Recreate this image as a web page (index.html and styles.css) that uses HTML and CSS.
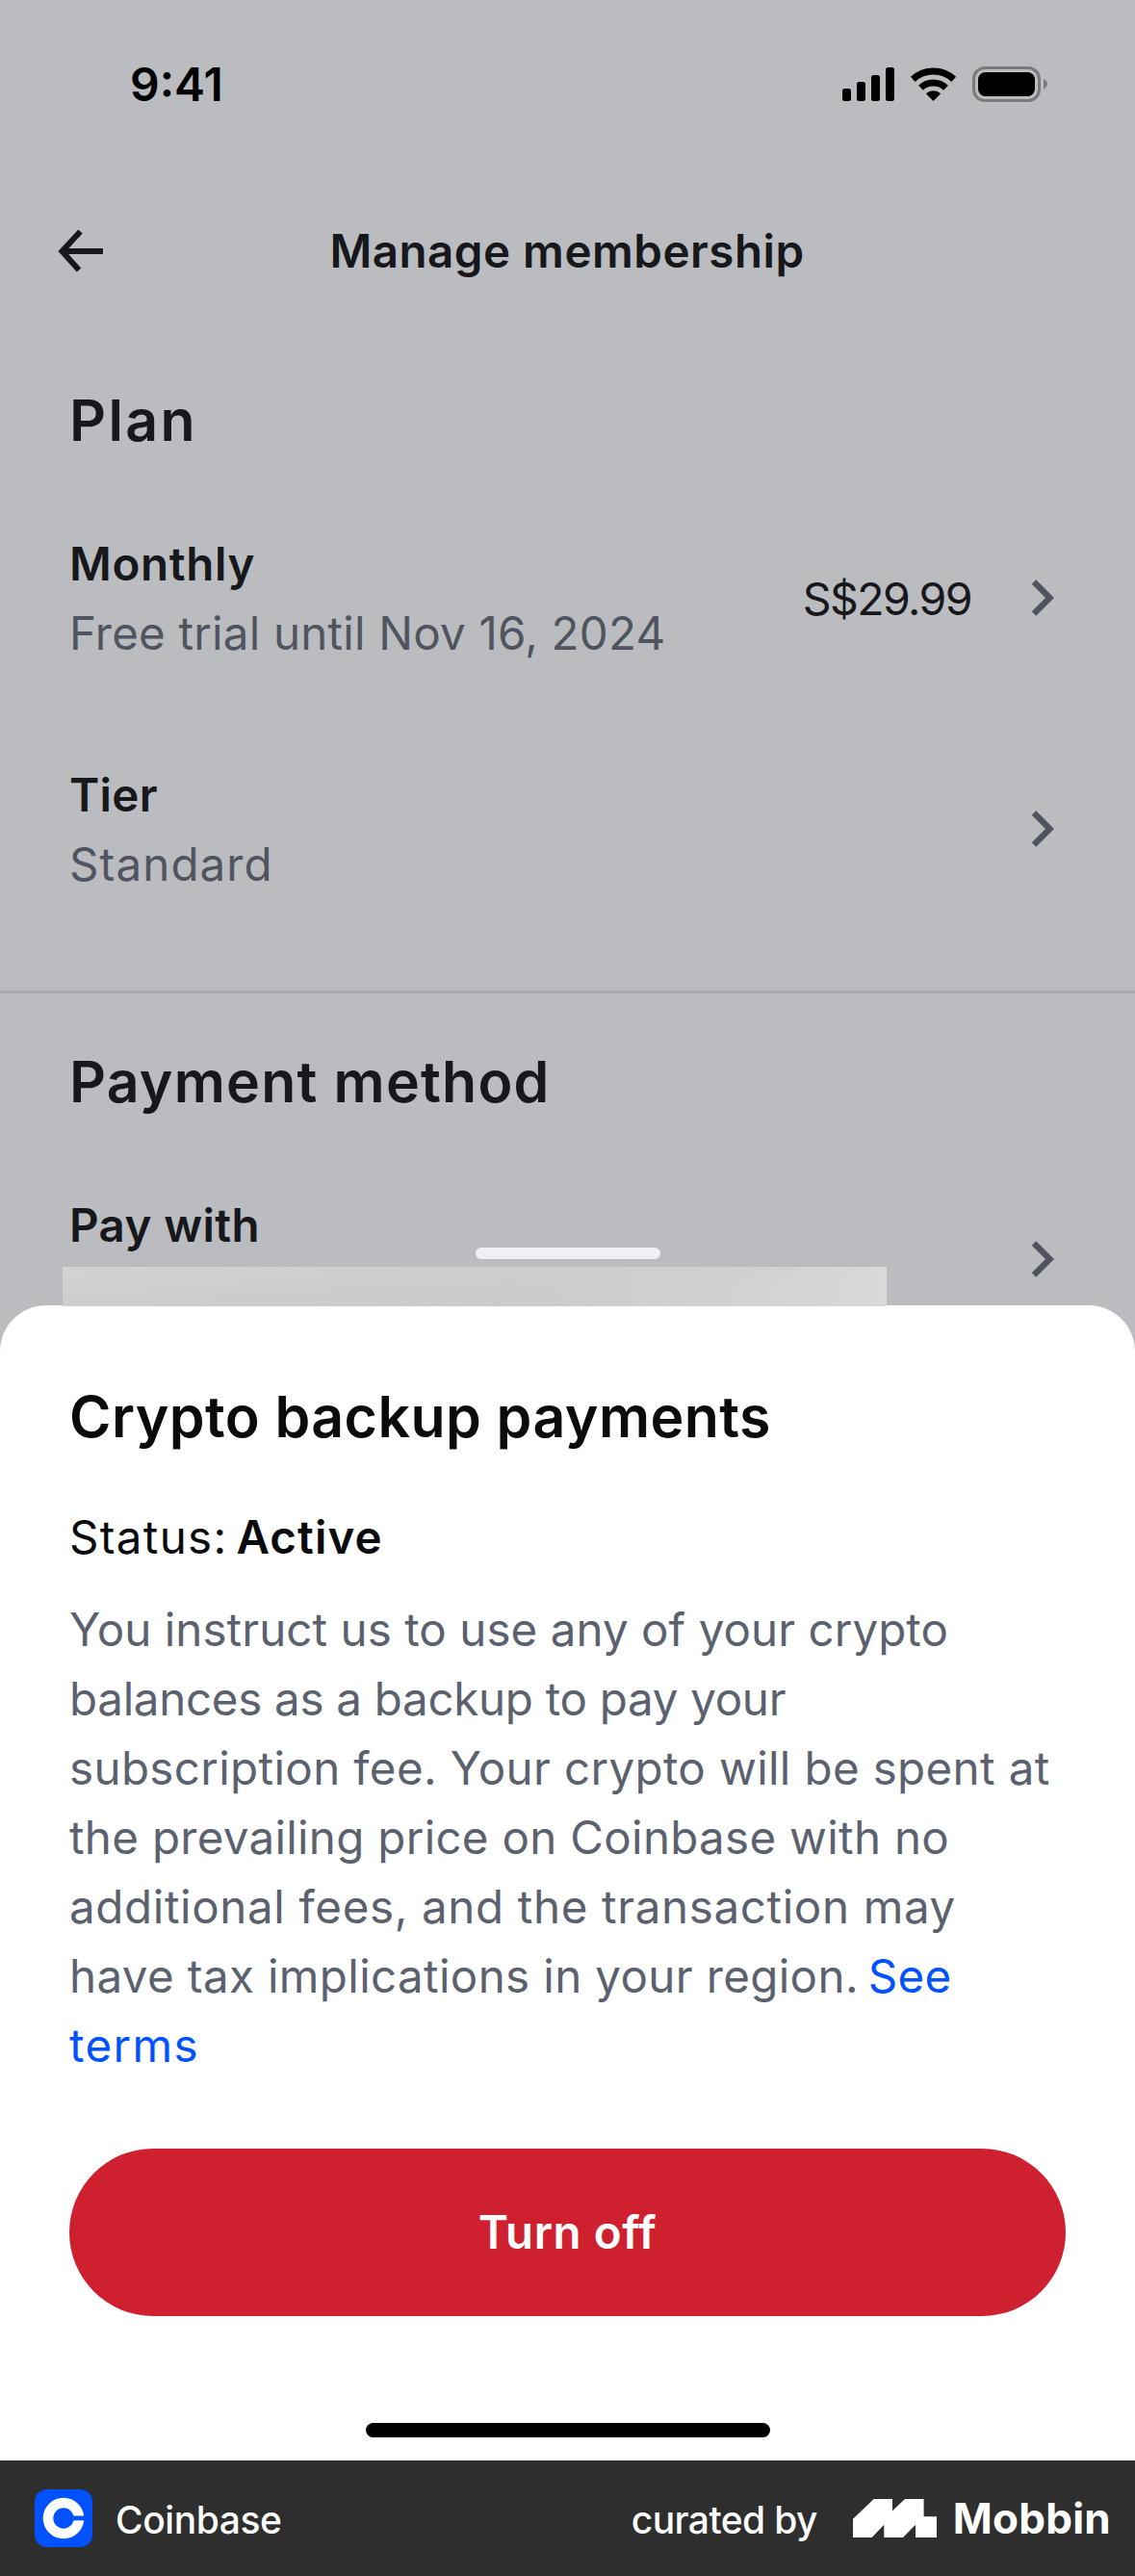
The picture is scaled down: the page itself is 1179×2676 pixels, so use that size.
FILE: index.html
```html
<!DOCTYPE html>
<html lang="en">
<head>
<meta charset="utf-8">
<title>Manage membership</title>
<link rel="stylesheet" href="styles.css">
</head>
<body>
<div class="screen">
  <main class="page">
    <div class="status-bar">
      <span class="time">9:41</span>
      <svg class="status-icons" width="216" height="40" viewBox="0 0 216 40">
        <rect x="1" y="24" width="9" height="13" rx="2.5"/>
        <rect x="16" y="17" width="9" height="20" rx="2.5"/>
        <rect x="31" y="10" width="9" height="27" rx="2.5"/>
        <rect x="46" y="2" width="9" height="35" rx="2.5"/>
        <g transform="translate(95.5 37)">
          <path d="M-21.2 -22.6A31 31 0 0 1 21.2 -22.6M-13 -13.8A19 19 0 0 1 13 -13.8" fill="none" stroke="#000" stroke-width="7"/>
          <path d="M0 0L-7.6 -7.8A11 11 0 0 1 7.6 -7.8Z"/>
        </g>
        <rect x="137.5" y="2.5" width="68" height="34" rx="11.5" fill="none" stroke="#797a7c" stroke-width="3"/>
        <rect x="142" y="7" width="59" height="25" rx="7.5"/>
        <path d="M210 14Q214 16 214 19T210 24.500Z" fill="#797a7c"/>
      </svg>
    </div>
    <header class="nav">
      <svg class="back" width="48" height="46" viewBox="0 0 48 46" fill="none" stroke="#16181c" stroke-width="6">
        <path d="M23.500 2.500L4.500 23L22 42.500M5 23H47"/>
      </svg>
      <h1 class="nav-title">Manage membership</h1>
    </header>
    <section class="group plan">
      <h2 class="heading heading-plan">Plan</h2>
      <div class="row">
        <div class="cell">
          <div class="label label-monthly">Monthly</div>
          <div class="sub sub-trial">Free trial until Nov 16, 2024</div>
        </div>
        <span class="price">S$29.99</span>
        <svg class="chevron" width="24" height="40" viewBox="0 0 24 40"><path d="M3 2.500L19.500 19L3 35.500"/></svg>
      </div>
      <div class="row">
        <div class="cell">
          <div class="label label-tier">Tier</div>
          <div class="sub sub-standard">Standard</div>
        </div>
        <svg class="chevron" width="24" height="40" viewBox="0 0 24 40"><path d="M3 2.500L19.500 19L3 35.500"/></svg>
      </div>
    </section>
    <section class="group payment">
      <h2 class="heading heading-payment">Payment method</h2>
      <div class="row">
        <div class="cell">
          <div class="label label-pay">Pay with</div>
          <div class="redacted"></div>
        </div>
        <svg class="chevron" width="24" height="40" viewBox="0 0 24 40"><path d="M3 2.500L19.500 19L3 35.500"/></svg>
      </div>
    </section>
  </main>
  <div class="handle"></div>
  <section class="sheet">
    <h2 class="sheet-title">Crypto backup payments</h2>
    <p class="state"><span class="state-label">Status:</span><strong class="state-value">Active</strong></p>
    <p class="copy">
      <span class="line line-1">You instruct us to use any of your crypto</span>
      <span class="line line-2">balances as a backup to pay your</span>
      <span class="line line-3">subscription fee. Your crypto will be spent at</span>
      <span class="line line-4">the prevailing price on Coinbase with no</span>
      <span class="line line-5">additional fees, and the transaction may</span>
      <span class="line line-6">have tax implications in your region. <a class="link link-see">See</a></span>
      <span class="line line-7"><a class="link">terms</a></span>
    </p>
    <button class="turn-off">Turn off</button>
    <div class="home-bar"></div>
  </section>
</div>
<footer class="footer">
  <svg class="app-icon" width="60" height="60" viewBox="0 0 60 60">
    <rect width="60" height="60" rx="13" fill="#0052ff"/>
    <circle cx="30" cy="30" r="16" fill="none" stroke="#fff" stroke-width="10.600"/>
    <rect x="39.500" y="27.500" width="13" height="4.800" fill="#0052ff"/>
  </svg>
  <span class="app-name">Coinbase</span>
  <span class="curated">curated by</span>
  <svg class="mobbin-mark" width="87" height="40" viewBox="0 0 87 40">
    <path fill="#fff" d="M0 20.700L21.700 0H41V12.300L54 0H73.600V18.300H87V40H65V26.700L52 40H32.300V26.700L19.600 40H0Z"/>
  </svg>
  <span class="mobbin">Mobbin</span>
</footer>
</body>
</html>
```
FILE: styles.css
```css
* { box-sizing: border-box; margin: 0; padding: 0; }
body {
  width: 1179px;
  font-family: Inter, "Liberation Sans", sans-serif;
  font-size: 47.5px;
  line-height: 72px;
  color: #0a0b0d;
  white-space: nowrap;
}
.screen { position: relative; height: 2556px; overflow: hidden; background: #bbbcc0; }
.page { color: #16181c; }

.status-bar { display: flex; justify-content: space-between; height: 225px; padding: 52px 89px 0 135px; color: #000; }
.time { font-size: 48px; font-weight: 600; }
.status-icons { margin-top: 16px; }

.nav { display: grid; grid-template-columns: 48px 1fr 48px; align-items: center; height: 72px; padding: 0 61px 0 60px; }
.nav-title { font-size: 47.5px; font-weight: 600; text-align: center; letter-spacing: .5px; }

.group { padding: 0 84px 0 72px; }
.plan { height: 735px; padding-top: 98px; border-bottom: 3px solid #a7a9ac; }
.payment { padding-top: 50px; }
.heading { font-size: 59px; line-height: 84px; font-weight: 600; padding-bottom: 71px; box-sizing: content-box; }
.heading-plan { letter-spacing: 2.4px; }
.heading-payment { letter-spacing: 1.2px; }
.row { display: flex; align-items: center; height: 144px; margin-bottom: 96px; }
.cell { flex: 1; }
.label { font-weight: 600; }
.label-monthly { letter-spacing: .65px; }
.label-tier { letter-spacing: .25px; }
.label-pay { letter-spacing: .39px; }
.sub { color: #50545f; }
.sub-trial { letter-spacing: .21px; }
.sub-standard { letter-spacing: 1.1px; }
.price { font-size: 46.5px; letter-spacing: -1.6px; margin-right: 62px; }
.chevron { fill: none; stroke: #50545f; stroke-width: 6.4; }
.redacted {
  position: relative;
  z-index: 2;
  width: 856px;
  height: 41px;
  margin: 7px 0 24px -7px;
  background: linear-gradient(175deg, #d2d3d4 0%, #cdcecf 30%, rgba(205, 206, 207, 0) 70%), linear-gradient(90deg, #d0d1d2 0%, #c7c8c9 18%, #cacbcc 55%, #d0d1d3 80%, #d8d9da 100%);
}

.handle { position: absolute; z-index: 3; left: 494px; top: 1296px; width: 192px; height: 12px; border-radius: 6px; background: #eef0f3; }
.sheet { position: absolute; left: 0; right: 0; top: 1356px; bottom: 0; padding: 74px 72px 0; background: #fff; border-radius: 48px 48px 0 0; }
.sheet-title { font-size: 59px; line-height: 84px; font-weight: 600; letter-spacing: .44px; }
.state { display: flex; gap: 9px; margin-top: 47px; }
.state-label { letter-spacing: 1.3px; }
.state-value { font-weight: 600; letter-spacing: 1.1px; }
.copy { margin-top: 24px; color: #5b616e; }
.line { display: block; }
.line-1 { letter-spacing: .06px; }
.line-2 { letter-spacing: -.29px; }
.line-3 { letter-spacing: .36px; }
.line-4 { letter-spacing: .3px; }
.line-5 { letter-spacing: .64px; }
.line-6 { letter-spacing: .37px; }
.line-7 { letter-spacing: 1.4px; }
.link { color: #0052ff; }
.link-see { margin-left: -4px; }
.turn-off {
  display: block;
  width: 1035px;
  height: 174px;
  margin-top: 71px;
  border: 0;
  border-radius: 87px;
  background: #cf202f;
  color: #fff;
  font: 600 47.5px/72px Inter, sans-serif;
  letter-spacing: .57px;
}
.home-bar { width: 420px; height: 15px; margin: 111px auto 0; border-radius: 8px; background: #000; }

.footer { display: flex; align-items: center; height: 120px; padding: 0 25px 0 36px; background: #2e2e2e; color: #fff; font-size: 39px; font-weight: 500; }
.app-name { flex: 1; margin-left: 24px; letter-spacing: -.44px; padding-top: 4px; }
.curated { letter-spacing: -.61px; padding-top: 4px; margin-right: 37px; }
.mobbin { margin-left: 17px; font-size: 44px; font-weight: 700; letter-spacing: .23px; }
```
